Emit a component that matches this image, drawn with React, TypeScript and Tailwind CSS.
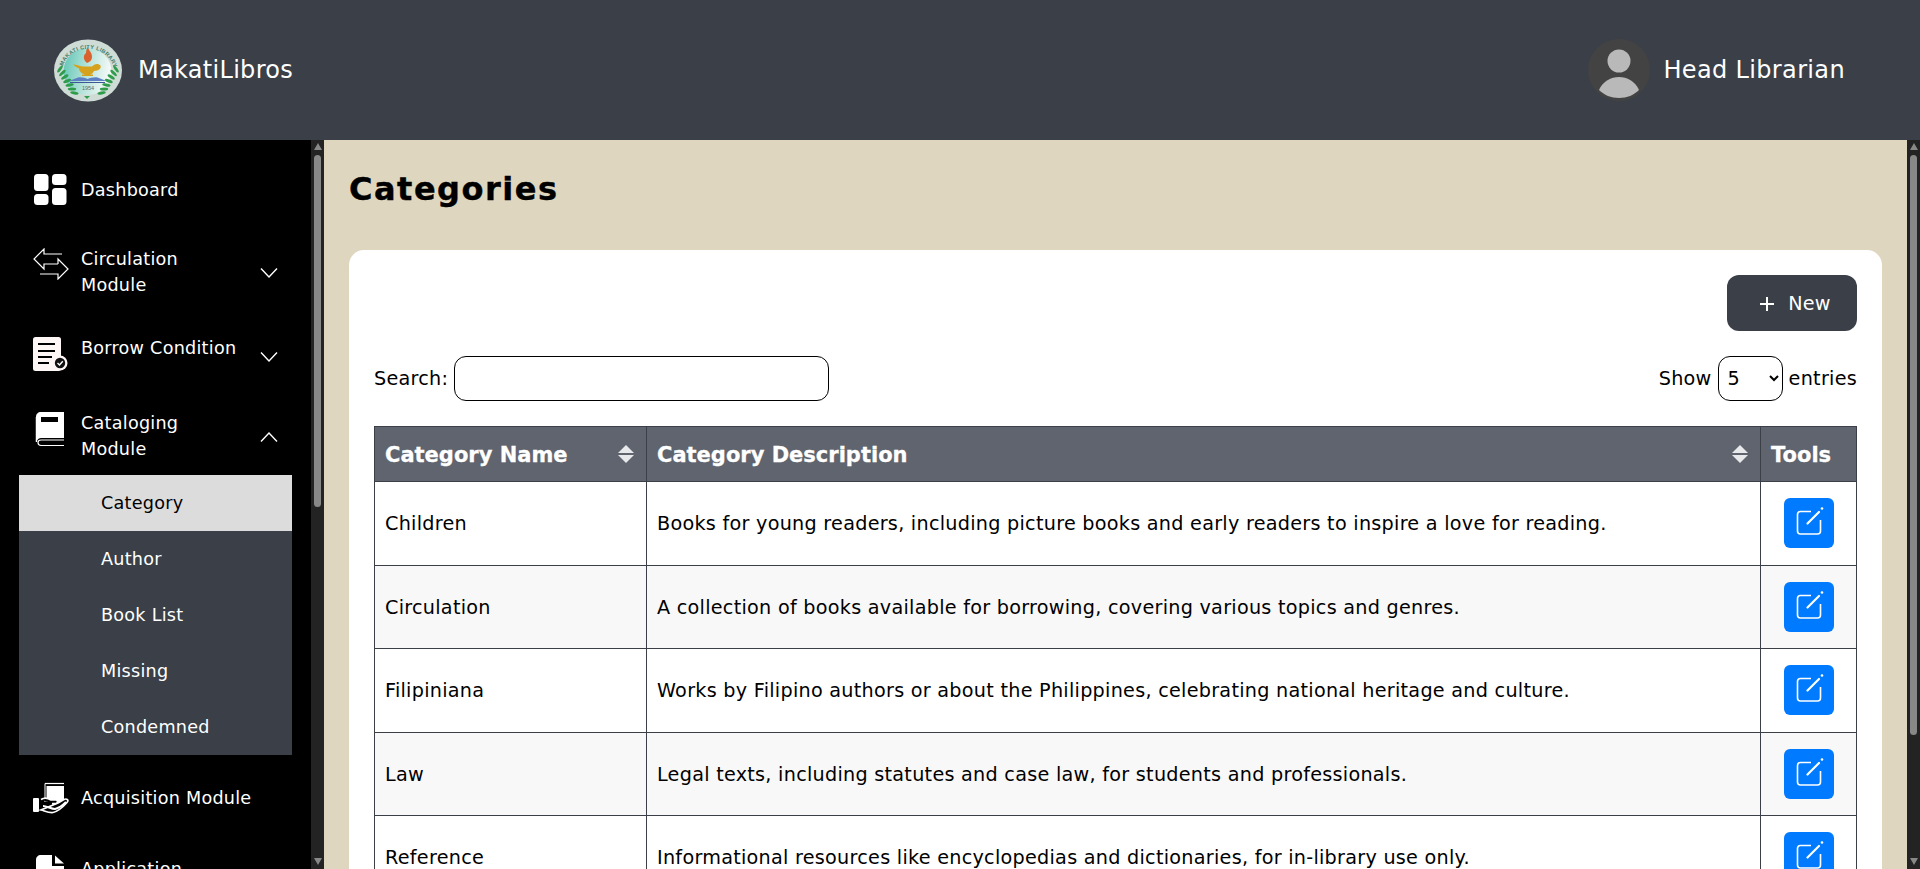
import { ReactNode } from "react";

const FONT = "font-['DejaVu_Sans','Noto_Sans',sans-serif]";

const rows = [
  { name: "Children", description: "Books for young readers, including picture books and early readers to inspire a love for reading." },
  { name: "Circulation", description: "A collection of books available for borrowing, covering various topics and genres." },
  { name: "Filipiniana", description: "Works by Filipino authors or about the Philippines, celebrating national heritage and culture." },
  { name: "Law", description: "Legal texts, including statutes and case law, for students and professionals." },
  { name: "Reference", description: "Informational resources like encyclopedias and dictionaries, for in-library use only." },
];

const submenu = ["Category", "Author", "Book List", "Missing", "Condemned"];

function Logo() {
  const leaves = [0, 1, 2, 3, 4, 5, 6];
  return (
    <svg width="68" height="63" viewBox="0 0 68 63">
      <defs>
        <linearGradient id="logoFill" x1="0" y1="0" x2="1" y2="0.2">
          <stop offset="0" stopColor="#5cc4b4" />
          <stop offset="0.55" stopColor="#b5e3da" />
          <stop offset="1" stopColor="#f2f8f6" />
        </linearGradient>
        <path id="logoArc" d="M8 30 A26.5 25 0 0 1 60 30" />
      </defs>
      <ellipse cx="34" cy="31.5" rx="34" ry="31" fill="#cfdcd6" />
      <ellipse cx="33.5" cy="32.5" rx="24" ry="23.5" fill="url(#logoFill)" />
      <text fontSize="5.6" fontWeight="700" fill="#3f7f6e" fontFamily="Liberation Sans, sans-serif" letterSpacing="0.25">
        <textPath href="#logoArc" startOffset="3">MAKATI CITY LIBRARY</textPath>
      </text>
      {leaves.map((i) => (
        <g key={i} fill="#2f9c4c">
          <ellipse cx={6 + i * 2.4} cy={30 + i * 4} rx="4.2" ry="1.5" transform={`rotate(${-55 + i * 11} ${6 + i * 2.4} ${30 + i * 4})`} />
          <ellipse cx={62 - i * 2.4} cy={30 + i * 4} rx="4.2" ry="1.5" transform={`rotate(${55 - i * 11} ${62 - i * 2.4} ${30 + i * 4})`} />
        </g>
      ))}
      <path d="M33 60 l-3 -3 h6 z" fill="#2f9c4c" />
      <path d="M33 24 c-4 -3 -4 -8 -1 -10 c0 -3 1 -5 2 -6 c0 3 4 5 4 10 c0 3 -2 5 -5 6 z" fill="#d9622e" />
      <path d="M19 25.5 c4 0 7 2 11 2 h8 c2 -2 4 -3 7 -2 c3 1 2 5 -2 6 l-3 .5 c-1 2 -2 3 -4 3.5 h3 v1.5 h-11 v-1.5 h3 c-4 -1 -6 -4 -6 -6 c-2 -1 -4 -2 -6 -4 z" fill="#d6a21e" />
      <path d="M15 42 l9 -3.500 c4 -.5 7 .5 9.500 1.500 c3 -1 6 -2 10 -1.500 l9 3.500 z" fill="#5d7fc4" />
      <path d="M16 43 h35 v1 h-35 z" fill="#3e5796" />
      <text x="34" y="51" textAnchor="middle" fontSize="5.500" fill="#5b6a66" fontFamily="Liberation Sans, sans-serif">1954</text>
    </svg>
  );
}

function Avatar() {
  return (
    <svg width="62" height="62" viewBox="0 0 62 62">
      <circle cx="31" cy="31" r="31" fill="#434343" />
      <circle cx="31" cy="22" r="11.500" fill="#b9b9b9" />
      <path d="M11 51 C15 42 23 38 31 38 C39 38 47 42 51 51 C46 56 39 59 31 59 C23 59 16 56 11 51 Z" fill="#b9b9b9" />
    </svg>
  );
}

function DashboardIcon() {
  return (
    <svg width="34" height="34" viewBox="0 0 34 34" fill="#fff">
      <rect x="1" y="1" width="14.500" height="17" rx="3.500" />
      <rect x="19" y="1" width="14.500" height="11" rx="3.500" />
      <rect x="1" y="21" width="14.500" height="11" rx="3.500" />
      <rect x="19" y="15" width="14.500" height="17" rx="3.500" />
    </svg>
  );
}

function CirculationIcon() {
  return (
    <svg width="36" height="32" viewBox="0 0 36 32" fill="none" stroke="#fff" strokeWidth="1.200">
      <path d="M29 6 H11 V1 L1 11 L11 21 V16 H25" />
      <path d="M7 26 H25 V31 L35 21 L25 11 V16" />
    </svg>
  );
}

function BorrowIcon() {
  return (
    <svg width="36" height="36" viewBox="0 0 36 36">
      <rect x="0" y="1" width="28" height="34" rx="2.500" fill="#fff6f6" />
      <g stroke="#000" strokeWidth="2">
        <path d="M5 8 H22" />
        <path d="M5 15 H22" />
        <path d="M5 21 H19" />
        <path d="M5 27 H16" />
      </g>
      <circle cx="27" cy="27" r="7.500" fill="#fff6f6" />
      <circle cx="27" cy="27" r="5.200" fill="#111" />
      <path d="M24.500 27 L26.500 29 L29.800 25.300" fill="none" stroke="#fff" strokeWidth="1.400" />
    </svg>
  );
}

function BookIcon() {
  return (
    <svg width="30" height="36" viewBox="0 0 30 36">
      <path d="M6 1 H29 V27 H6 C4 27 3 28 2.500 29 H1 V6 C1 3 3 1 6 1 Z" fill="#fff" />
      <path d="M29 34.500 H6 C2 34.500 2 29 6 29 H29" fill="none" stroke="#fff" strokeWidth="1.200" />
      <path d="M1.500 6 V31" stroke="#fff" strokeWidth="1.500" />
      <rect x="6" y="6" width="17" height="5" fill="#000" />
    </svg>
  );
}

function AcquisitionIcon() {
  return (
    <svg width="36" height="32" viewBox="0 0 36 32">
      <path d="M12 1.500 H31" stroke="#fff" strokeWidth="1.200" />
      <rect x="13.500" y="4" width="17.500" height="16" fill="#fff" />
      <path d="M12 1.500 V20" stroke="#fff" strokeWidth="1" />
      <rect x="0" y="16" width="6" height="14" rx="1" fill="#fff" />
      <path d="M8 17.500 C12 15 15 16 18 18 H23 C25 18 25 21 23 21.500 H19 M25 21 L31 17.500 C34 16 36 18.500 34 20.500 C30 25 26 29 20 30.500 C15 31 11 28.500 8 28 Z" fill="#000" stroke="#fff" strokeWidth="1.700" />
      <path d="M10 24 C14 24 18 27 22 27 C26 26 30 23 33 20" stroke="#fff" strokeWidth="2" fill="none" />
    </svg>
  );
}

function ApplicationIcon() {
  return (
    <svg width="30" height="36" viewBox="0 0 30 36" fill="#fff">
      <path d="M6 1 H17 V12 H29 V31 C29 33 27 35 25 35 H5 C3 35 1 33 1 31 V6 C1 3 3 1 6 1 Z" />
      <path d="M20 1.500 L29 9.500 H20 Z" />
    </svg>
  );
}

function Chevron({ up }: { up?: boolean }) {
  return (
    <svg width="18" height="10" viewBox="0 0 18 10" fill="none" stroke="#fff" strokeWidth="1.400">
      <path d={up ? "M1 9.500 L9 1 L17 9.500" : "M1 .5 L9 9 L17 .5"} />
    </svg>
  );
}

function EditIcon() {
  return (
    <svg width="50" height="50" viewBox="0 0 50 50" fill="none" stroke="#fff">
      <path d="M27 13.500 H16.500 C14.500 13.500 13.500 14.500 13.500 16.500 V33 C13.500 35 14.500 36 16.500 36 H33.500 C35.500 36 36.500 35 36.500 33 V22" strokeWidth="1.600" />
      <path d="M23.500 25.500 L35 14" strokeWidth="2.200" strokeLinecap="round" />
      <circle cx="38" cy="10.500" r="1.300" fill="#fff" stroke="none" />
    </svg>
  );
}

function SortIcon() {
  return (
    <svg width="16" height="18" viewBox="0 0 16 18" fill="#e8e9eb">
      <path d="M8 0 L16 8 H0 Z" />
      <path d="M0 10 H16 L8 18 Z" />
    </svg>
  );
}

function Scrollbar({ thumb }: { thumb: string }) {
  return (
    <div className="flex h-full w-[13px] shrink-0 flex-col items-center bg-[#232323]">
      <div className="mt-[3px] h-0 w-0 border-x-[4px] border-b-[7px] border-x-transparent border-b-[#888888]" />
      <div className={`mt-[5px] w-[7px] rounded-[4px] bg-[#888888] ${thumb}`} />
      <div className="mt-auto mb-[4px] h-0 w-0 border-x-[4px] border-t-[7px] border-x-transparent border-t-[#888888]" />
    </div>
  );
}

function NavItem({
  icon,
  label,
  chevron,
  className,
  iconClass = "",
  labelClass = "",
}: {
  icon: ReactNode;
  label: ReactNode;
  chevron?: "up" | "down";
  className: string;
  iconClass?: string;
  labelClass?: string;
}) {
  return (
    <div className={`flex shrink-0 items-center pl-[14px] pr-[14px] text-white ${className}`}>
      <div className={`flex w-[36px] shrink-0 ${iconClass}`}>{icon}</div>
      <div className={`ml-[12px] whitespace-nowrap text-[17.6px] leading-[26px] tracking-[0.25px] ${labelClass}`}>{label}</div>
      {chevron && (
        <div className="ml-auto mt-[2px]">
          <Chevron up={chevron === "up"} />
        </div>
      )}
    </div>
  );
}

export default function App() {
  return (
    <div className={`flex h-[869px] w-[1920px] flex-col overflow-hidden bg-black ${FONT}`}>
      <header className="flex h-[140px] shrink-0 items-center justify-between bg-[#3a3f48] pl-[54px] pr-[75px] text-white">
        <div className="flex items-center gap-[16px]">
          <Logo />
          <span className="text-[24px] tracking-[0.3px]">MakatiLibros</span>
        </div>
        <div className="flex items-center gap-[13px]">
          <Avatar />
          <span className="text-[24px] tracking-[0.35px]">Head Librarian</span>
        </div>
      </header>

      <div className="flex h-[729px]">
        <aside className="flex h-full w-[311px] shrink-0 flex-col overflow-hidden bg-black px-[19px]">
          <NavItem icon={<DashboardIcon />} label="Dashboard" className="mt-[22px] h-[56px]" />
          <NavItem
            icon={<CirculationIcon />}
            label={<>Circulation<br />Module</>}
            chevron="down"
            className="mt-[18px] h-[72px]"
            iconClass="-mt-[16px]"
          />
          <NavItem
            icon={<BorrowIcon />}
            label="Borrow Condition"
            chevron="down"
            className="mt-[12px] h-[72px]"
            iconClass="-mt-[4px]"
            labelClass="-mt-[16px]"
          />
          <NavItem
            icon={<BookIcon />}
            label={<>Cataloging<br />Module</>}
            chevron="up"
            className="mt-[8px] h-[72px]"
            iconClass="-mt-[14px] pl-[2px]"
          />
          <div className="mt-[3px] flex shrink-0 flex-col bg-[#3a3f48] text-[17.6px] tracking-[0.25px] text-white">
            {submenu.map((item, i) => (
              <div
                key={item}
                className={`flex h-[56px] items-center pl-[82px] pt-[1px] ${i === 0 ? "bg-[#dcdcdc] text-black" : ""}`}
              >
                {item}
              </div>
            ))}
          </div>
          <NavItem icon={<AcquisitionIcon />} label="Acquisition Module" className="mt-[15px] h-[56px]" />
          <NavItem
            icon={<ApplicationIcon />}
            label={<>Application<br />Module</>}
            className="mt-[20px] h-[72px]"
            iconClass="-mt-[20px] pl-[2px]"
          />
        </aside>
        <Scrollbar thumb="h-[352px]" />

        <main className="h-full min-w-0 flex-1 overflow-hidden bg-[#ded6bf] px-[25px]">
          <h1 className="mt-[25px] h-[85px] text-[32px] font-bold leading-[48px] tracking-[1.5px] text-black [-webkit-text-stroke:0.4px_black]">Categories</h1>

          <section className="rounded-[15px] bg-white p-[25px] text-[19.2px] tracking-[0.27px] text-black">
            <div className="flex justify-end">
              <button type="button" className="flex h-[56px] w-[130px] items-center justify-center gap-[13px] rounded-[12px] bg-[#3a3f48] pl-[6px] pt-[2px] text-white">
                <svg width="16" height="16" viewBox="0 0 16 16" stroke="#fff" strokeWidth="2">
                  <path d="M8 1 V15 M1 8 H15" />
                </svg>
                New
              </button>
            </div>

            <div className="mt-[25px] flex h-[45px] items-center justify-between">
              <label className="flex items-center gap-[6px]">
                <span className="pt-[2px]">Search:</span>
                <input className="h-[45px] w-[375px] rounded-[12px] border border-black bg-white outline-none" />
              </label>
              <div className="flex items-center gap-[6px]">
                <span className="pt-[2px]">Show</span>
                <select className="h-[45px] w-[65px] rounded-[12px] border border-black bg-white pl-[5px]" defaultValue="5">
                  <option>5</option>
                  <option>10</option>
                  <option>25</option>
                </select>
                <span className="pt-[2px]">entries</span>
              </div>
            </div>

            <table className="mt-[25px] w-full table-fixed border-collapse">
              <colgroup>
                <col className="w-[272px]" />
                <col />
                <col className="w-[96px]" />
              </colgroup>
              <thead>
                <tr className="h-[55px] bg-[#5f646e] text-left text-[21px] font-bold tracking-normal text-white [-webkit-text-stroke:0.3px_white]">
                  <th className="border border-[#3a3f48] px-[10px]">
                    <div className="flex items-center justify-between pr-[2px]">
                      <span className="pt-[3px]">Category Name</span>
                      <SortIcon />
                    </div>
                  </th>
                  <th className="border border-[#3a3f48] px-[10px]">
                    <div className="flex items-center justify-between pr-[2px]">
                      <span className="pt-[3px]">Category Description</span>
                      <SortIcon />
                    </div>
                  </th>
                  <th className="border border-[#3a3f48] px-[10px] pt-[3px]">Tools</th>
                </tr>
              </thead>
              <tbody>
                {rows.map((row, i) => (
                  <tr key={row.name} className={`h-[83.5px] ${i % 2 === 1 ? "bg-[#f8f8f8]" : "bg-white"}`}>
                    <td className="border border-[#3a3f48] px-[10px] pt-[3px]">{row.name}</td>
                    <td className="border border-[#3a3f48] px-[10px] pt-[3px]">{row.description}</td>
                    <td className="border border-[#3a3f48]">
                      <button type="button" className="mx-auto flex h-[50px] w-[50px] items-center justify-center rounded-[6px] bg-[#007bff]">
                        <EditIcon />
                      </button>
                    </td>
                  </tr>
                ))}
              </tbody>
            </table>
          </section>
        </main>
        <Scrollbar thumb="h-[580px]" />
      </div>
    </div>
  );
}
